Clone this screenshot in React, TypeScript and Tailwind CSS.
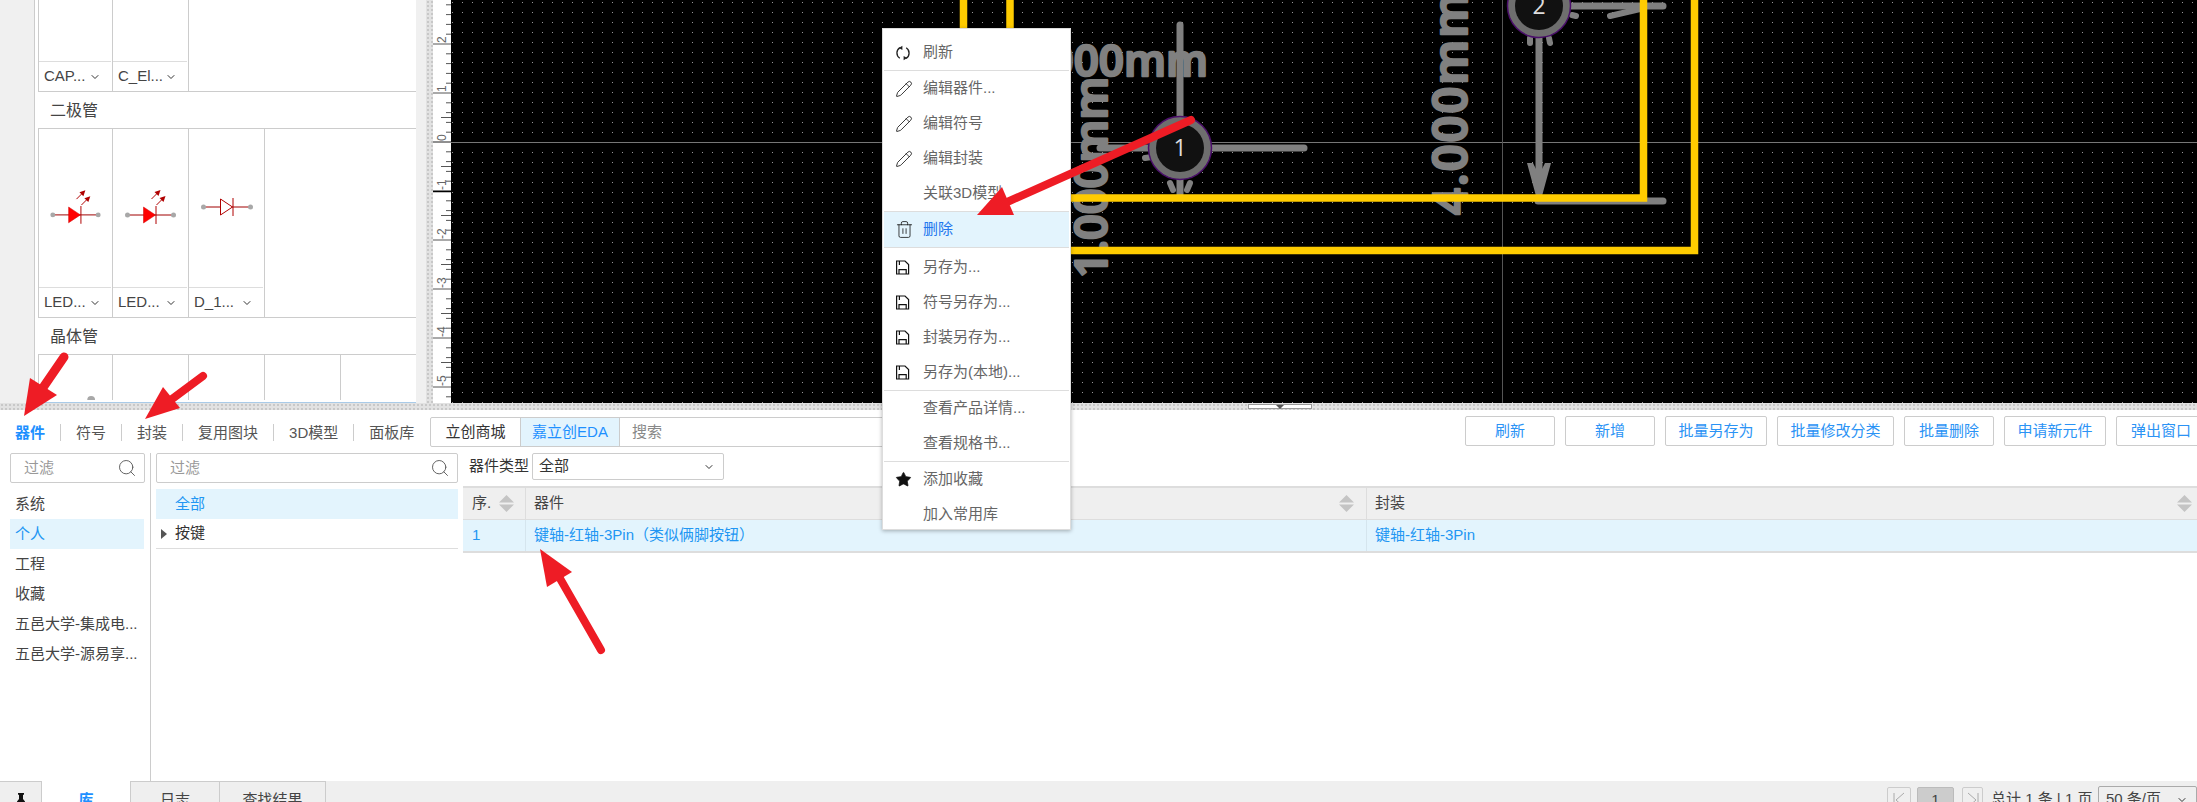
import { ChevronDown, Pencil, Search, Star, Trash2 } from 'lucide-react'
import type { ReactNode } from 'react'

const SideItem = ({ label, active }: { label: string; active?: boolean }) => (
  <div
    className={`h-[30px] leading-[30px] px-[5px] truncate ${
      active ? 'bg-[#e3f4fd] text-[#2196f3]' : 'text-[#444]'
    }`}
  >
    {label}
  </div>
)

const FilterInput = ({ width }: { width: string }) => (
  <div
    className={`${width} h-[30px] shrink-0 border border-[#ccc] rounded-[2px] flex items-center justify-between pl-[13px] pr-[7px] text-[#999]`}
  >
    <span>过滤</span>
    <Search size={20} strokeWidth={1.1} className="text-[#555]" />
  </div>
)

const SortArrows = () => (
  <svg width="15" height="17" viewBox="0 0 15 17" className="shrink-0">
    <polygon points="7.5,0 15,7.5 0,7.5" fill="#c4c4c4" />
    <polygon points="0,9.5 15,9.5 7.5,17" fill="#c4c4c4" />
  </svg>
)

const Led = () => (
  <svg viewBox="0 0 74 158" className="w-full h-full">
    <line x1="14" y1="86" x2="60" y2="86" stroke="#a00000" strokeWidth="1" />
    <polygon points="30,78 42,86 30,94" fill="#ff0000" stroke="#d00000" strokeWidth="0.5" />
    <line x1="42.5" y1="77" x2="42.5" y2="95" stroke="#b00000" strokeWidth="1" />
    <line x1="38" y1="70" x2="44" y2="64" stroke="#b00000" strokeWidth="1" />
    <polygon points="47,61 45,67 41,63" fill="#b00000" />
    <line x1="43" y1="76" x2="49" y2="70" stroke="#b00000" strokeWidth="1" />
    <polygon points="52,67 50,73 46,69" fill="#b00000" />
    <circle cx="14" cy="86" r="2.5" fill="#a8a8a8" />
    <circle cx="60" cy="86" r="2.5" fill="#a8a8a8" />
  </svg>
)

const Diode = () => (
  <svg viewBox="0 0 74 158" className="w-full h-full">
    <line x1="14" y1="78" x2="61" y2="78" stroke="#a00000" strokeWidth="1" />
    <polygon points="31,70 43,78 31,86" fill="#fff" stroke="#b00000" strokeWidth="1" />
    <line x1="43.5" y1="69" x2="43.5" y2="87" stroke="#b00000" strokeWidth="1" />
    <circle cx="14" cy="78" r="2.5" fill="#a8a8a8" />
    <circle cx="61" cy="78" r="2.5" fill="#a8a8a8" />
  </svg>
)

const Cell = ({
  label,
  width,
  children,
}: {
  label?: string
  width: string
  children?: ReactNode
}) => (
  <div className={`${width} h-full shrink-0 border-r border-[#ccc] flex flex-col`}>
    <div className="flex-1 min-h-0 overflow-hidden">{children}</div>
    {label && (
      <div className="h-[30px] shrink-0 mr-[1px] border-t border-[#ddd] flex items-center justify-between pl-[5px] pr-[10px] text-[#444]">
        <span>{label}</span>
        <ChevronDown size={12} strokeWidth={2} className="text-[#333]" />
      </div>
    )}
  </div>
)

const SectionTitle = ({ children }: { children: ReactNode }) => (
  <div className="h-[36px] leading-[38px] pl-[12px] text-[16px] text-[#444]">{children}</div>
)

const RULER_MARKS = [-5, -4, -3, -2, -1, 0, 1, 2]

const Ruler = () => {
  const ticks: number[] = []
  for (let i = -15; i <= 26; i++) ticks.push(142 + i * 9.8)
  return (
    <svg viewBox="433 0 18 403" className="block w-[18px] h-[403px] shrink-0 bg-white">
      {ticks.map((y, i) => {
        const step = i - 15
        const whole = step % 5 === 0
        const half = !whole && false
        return (
          <line
            key={i}
            x1={whole ? 433 : half ? 441 : 446}
            x2="451"
            y1={y}
            y2={y}
            stroke="#555"
            strokeWidth="1"
          />
        )
      })}
      {[-0.5, 0.5, 1.5, 2.5, 3.5, 4.5, 5.5].map((n) => (
        <line key={n} x1="441" x2="451" y1={142 + n * 49} y2={142 + n * 49} stroke="#555" />
      ))}
      <line x1="433" x2="451" y1="142" y2="142" stroke="#777" />
      <line x1="433" x2="451" y1="191.5" y2="191.5" stroke="#000" strokeWidth="1.5" />
      {RULER_MARKS.map((m) => {
        const y = 142 - m * 49 - 1
        return (
          <text
            key={m}
            x="446"
            y={y}
            fontSize="12"
            fill="#666"
            transform={`rotate(-90 446 ${y})`}
          >
            {m}
          </text>
        )
      })}
    </svg>
  )
}

const DIM_TEXT = {
  fill: '#808080',
  stroke: '#808080',
  strokeWidth: 2.5,
  strokeLinejoin: 'round' as const,
  fontFamily: '"Open Sans", sans-serif',
  fontWeight: 600,
}

const Pad = ({ x, y, n }: { x: number; y: number; n: string }) => (
  <g>
    <circle cx={x} cy={y} r="31.5" fill="#6e6e6e" stroke="#4b0f6b" strokeWidth="1.5" />
    <circle cx={x} cy={y} r="24" fill="#111" />
    <text
      x={x}
      y={y + 8}
      textAnchor="middle"
      fontSize="23"
      fill="#ddd"
      fontFamily='"Open Sans", sans-serif'
    >
      {n}
    </text>
  </g>
)

const Board = () => (
  <svg viewBox="451 0 1746 403" className="block w-[1746px] h-[403px] shrink-0 bg-black">
    <defs>
      <pattern id="grid" x="2" y="2" width="10" height="10" patternUnits="userSpaceOnUse">
        <rect width="1" height="1" fill="#9a9a9a" />
      </pattern>
    </defs>
    <rect x="451" y="0" width="1746" height="403" fill="url(#grid)" />
    <line x1="451" y1="142.5" x2="2197" y2="142.5" stroke="#777" />
    <line x1="1502.5" y1="0" x2="1502.5" y2="403" stroke="#555" />

    <g stroke="#808080" strokeWidth="7" strokeLinecap="round" fill="none">
      <line x1="1180" y1="25" x2="1180" y2="120" />
      <line x1="1100" y1="148" x2="1304" y2="148" />
      <line x1="1180" y1="176" x2="1180" y2="194" />
      <line x1="1170" y1="183" x2="1173" y2="190" strokeWidth="6" />
      <line x1="1190" y1="183" x2="1187" y2="190" strokeWidth="6" />
      <line x1="1145" y1="158" x2="1152" y2="157" strokeWidth="6" />
      <line x1="1539" y1="38" x2="1539" y2="190" />
      <line x1="1530" y1="38" x2="1530" y2="43" strokeWidth="6" />
      <line x1="1549" y1="38" x2="1550" y2="43" strokeWidth="6" />
      <line x1="1572" y1="15" x2="1576" y2="16" strokeWidth="6" />
      <line x1="1570" y1="6" x2="1663" y2="6" />
      <line x1="1538" y1="201" x2="1663" y2="201" />
      <line x1="1610" y1="16" x2="1640" y2="9" strokeWidth="6" />
    </g>
    <polygon points="1527,163 1533,163 1539,175 1545,163 1551,163 1542,196 1536,196" fill="#808080" />

    <text x="1208" y="76" textAnchor="end" fontSize="44" {...DIM_TEXT}>
      1.000mm
    </text>
    <text x="1107" y="278" fontSize="45" transform="rotate(-90 1107 278)" {...DIM_TEXT}>
      1.000mm
    </text>
    <text
      x="1467"
      y="215"
      fontSize="47"
      letterSpacing="2"
      transform="rotate(-90 1467 215)"
      {...DIM_TEXT}
    >
      4.000mm
    </text>

    <g fill="none" stroke="#ffcc00" strokeWidth="7.5" strokeLinejoin="miter">
      <path d="M963.5 -5V198H1643.5V-5" />
      <path d="M1010 -5V250.5H1694.5V-5" />
    </g>

    <Pad x={1180} y={148} n="1" />
    <Pad x={1539} y={6} n="2" />
  </svg>
)

const RefreshIcon = () => (
  <svg width="16" height="16" viewBox="0 0 16 16" fill="none" stroke="#222" strokeWidth="1.3">
    <path d="M5 2.6A6.2 6.2 0 0 0 4.8 13.2" />
    <path d="M11 13.4A6.2 6.2 0 0 0 11.2 2.8" />
    <polygon points="7.4,0.8 7.4,5 3.9,2.9" fill="#222" stroke="none" />
    <polygon points="8.6,15.2 8.6,11 12.1,13.1" fill="#222" stroke="none" />
  </svg>
)

const SaveIcon = () => (
  <svg width="15" height="15" viewBox="0 0 15 15" fill="none" stroke="#111" strokeWidth="1.2">
    <path d="M1.6 1H10L13.6 4.6V14H1.6Z" />
    <path d="M4 14V9.6H11.2V14" />
    <path d="M4.4 1V5" />
  </svg>
)

type MenuEntry = { label?: string; icon?: ReactNode; active?: boolean; sep?: boolean; wide?: boolean }

const pencil = <Pencil size={18} strokeWidth={1.1} className="text-[#111]" />

const MENU: MenuEntry[] = [
  { label: '刷新', icon: <RefreshIcon /> },
  { sep: true },
  { label: '编辑器件...', icon: pencil },
  { label: '编辑符号', icon: pencil },
  { label: '编辑封装', icon: pencil },
  { label: '关联3D模型' },
  { sep: true },
  { label: '删除', active: true, icon: <Trash2 size={19} strokeWidth={1} className="text-[#111]" /> },
  { sep: true, wide: true },
  { label: '另存为...', icon: <SaveIcon /> },
  { label: '符号另存为...', icon: <SaveIcon /> },
  { label: '封装另存为...', icon: <SaveIcon /> },
  { label: '另存为(本地)...', icon: <SaveIcon /> },
  { sep: true },
  { label: '查看产品详情...' },
  { label: '查看规格书...' },
  { sep: true },
  { label: '添加收藏', icon: <Star size={17} fill="#111" strokeWidth={1} className="text-[#111]" /> },
  { label: '加入常用库' },
]

const ContextMenu = () => (
  <div className="absolute left-[882px] top-[28px] w-[189px] h-[502px] pt-[6px] bg-white border border-[#ddd] shadow-[0_1px_4px_rgba(0,0,0,0.3)] text-[15px] text-[#666]">
    {MENU.map((m, i) =>
      m.sep ? (
        <div key={i} className={`h-[1px] mx-[1px] bg-[#ddd] ${m.wide ? 'mb-[2px]' : ''}`} />
      ) : (
        <div
          key={i}
          className={`h-[35px] mx-[1px] flex items-center ${m.active ? 'bg-[#e3f4fd] text-[#2277ee]' : ''}`}
        >
          <span className="w-[39px] pl-[11px] shrink-0 flex items-center">{m.icon}</span>
          <span>{m.label}</span>
        </div>
      ),
    )}
  </div>
)

const RedArrow = ({ from, to, head, w }: { from: number[]; to: number[]; head: number[]; w: number }) => (
  <g>
    <line x1={from[0]} y1={from[1]} x2={to[0]} y2={to[1]} stroke="#ee1c25" strokeWidth={w} strokeLinecap="round" />
    <polygon points={head.join(',')} fill="#ee1c25" />
  </g>
)

const Arrows = () => (
  <svg className="absolute inset-0 pointer-events-none" width="2197" height="802">
    <RedArrow from={[64, 357]} to={[40, 392]} head={[24, 416, 30, 378, 57, 395]} w={9} />
    <RedArrow from={[203, 376]} to={[168, 402]} head={[145, 419, 163, 387, 180, 408]} w={8} />
    <RedArrow from={[601, 650]} to={[558, 575]} head={[540, 549, 572, 572, 547, 587]} w={8} />
    <RedArrow from={[1191, 120]} to={[1005, 203]} head={[977, 215, 1002, 187, 1014, 215]} w={8} />
  </svg>
)

const BUTTONS = [
  { label: '刷新', w: 'w-[90px]' },
  { label: '新增', w: 'w-[90px]' },
  { label: '批量另存为', w: 'w-[102px]' },
  { label: '批量修改分类', w: 'w-[117px]' },
  { label: '批量删除', w: 'w-[90px]' },
  { label: '申请新元件', w: 'w-[102px]' },
  { label: '弹出窗口', w: 'w-[90px]' },
]

const TABS = ['器件', '符号', '封装', '复用图块', '3D模型', '面板库']

export default function App() {
  return (
    <div className="relative w-full h-[802px] overflow-hidden flex flex-col bg-white text-[15px] font-['Liberation_Sans','Noto_Sans_CJK_SC',sans-serif]">
      {/* top: library panel, ruler, board */}
      <div className="h-[403px] shrink-0 flex overflow-hidden">
        <div className="w-[35px] shrink-0 bg-[#f0f0f0] border-r border-[#ccc]" />
        <div className="w-[381px] shrink-0 h-full pl-[3px] border-b border-[#a9cbe8] overflow-hidden">
          <div className="h-[92px] flex border-l border-b border-[#ccc]">
            <Cell width="w-[74px]" label="CAP..." />
            <Cell width="w-[76px]" label="C_El..." />
          </div>
          <SectionTitle>二极管</SectionTitle>
          <div className="h-[190px] flex border-l border-t border-b border-[#ccc]">
            <Cell width="w-[74px]" label="LED...">
              <Led />
            </Cell>
            <Cell width="w-[76px]" label="LED...">
              <Led />
            </Cell>
            <Cell width="w-[76px]" label="D_1...">
              <Diode />
            </Cell>
          </div>
          <SectionTitle>晶体管</SectionTitle>
          <div className="h-[46px] flex border-l border-t border-[#ccc]">
            <Cell width="w-[74px]">
              <svg viewBox="0 0 74 46" className="w-full h-full">
                <circle cx="53" cy="46" r="4" fill="#a8a8a8" />
              </svg>
            </Cell>
            <Cell width="w-[76px]" />
            <Cell width="w-[76px]" />
            <Cell width="w-[76px]" />
          </div>
        </div>
        <div className="w-[10px] shrink-0 bg-[#f0f0f0]" />
        <div className="w-[7px] shrink-0 bg-[#e2e2e2] bg-[radial-gradient(#c8c8c8_1px,transparent_1px)] bg-[length:4px_4px]" />
        <Ruler />
        <Board />
      </div>

      {/* splitter */}
      <div className="h-[7px] shrink-0 flex bg-[#e2e2e2] bg-[radial-gradient(#c8c8c8_1px,transparent_1px)] bg-[length:4px_4px]">
        <div className="ml-[1248px] mt-[1px] w-[64px] h-[5px] bg-white border border-[#999] flex justify-center">
          <div className="w-0 h-0 border-x-[4px] border-x-transparent border-t-[4px] border-t-[#555]" />
        </div>
      </div>

      {/* library tabs and actions */}
      <div className="h-[43px] shrink-0 flex items-start pt-[6px]">
        <div className="w-[430px] shrink-0 flex items-center h-[30px] mt-[1px]">
          {TABS.map((t, i) => (
            <div
              key={t}
              className={`h-[17px] leading-[17px] px-[15px] ${i < TABS.length - 1 ? 'border-r border-[#ccc]' : ''} ${
                i === 0 ? 'text-[#1e90ff] font-bold' : 'text-[#555]'
              }`}
            >
              {t}
            </div>
          ))}
        </div>
        <div className="flex h-[30px] mt-[1px] border border-[#ccc] rounded-l-[2px] w-[510px] shrink-0">
          <div className="w-[89px] shrink-0 text-center leading-[28px] text-[#333]">立创商城</div>
          <div className="w-[100px] shrink-0 text-center leading-[28px] bg-[#e3f4fd] text-[#1e90ff] border-x border-[#ccc]">
            嘉立创EDA
          </div>
          <div className="flex-1 pl-[12px] leading-[28px] text-[#888]">搜索</div>
        </div>
        <div className="ml-auto -mr-[9px] flex gap-[10px]">
          {BUTTONS.map((b) => (
            <div
              key={b.label}
              className={`${b.w} h-[30px] shrink-0 border border-[#ccc] rounded-[2px] text-center leading-[28px] text-[#2b93f5]`}
            >
              {b.label}
            </div>
          ))}
        </div>
      </div>

      {/* library body */}
      <div className="h-[328px] shrink-0 flex pl-[10px]">
        <div className="w-[141px] shrink-0 pr-[6px] border-r border-[#ccc]">
          <FilterInput width="w-[135px]" />
          <div className="mt-[6px]">
            <SideItem label="系统" />
            <SideItem label="个人" active />
            <SideItem label="工程" />
            <SideItem label="收藏" />
            <SideItem label="五邑大学-集成电..." />
            <SideItem label="五邑大学-源易享..." />
          </div>
        </div>
        <div className="w-[302px] shrink-0 ml-[5px]">
          <FilterInput width="w-full" />
          <div className="mt-[6px] h-[30px] leading-[30px] pl-[19px] bg-[#e3f4fd] text-[#2196f3]">全部</div>
          <div className="h-[30px] border-b border-[#ddd] flex items-center pl-[5px] text-[#333]">
            <div className="w-0 h-0 border-y-[5px] border-y-transparent border-l-[6px] border-l-[#555] mr-[8px]" />
            按键
          </div>
        </div>
        <div className="flex-1 min-w-0 ml-[5px]">
          <div className="h-[27px] flex items-center pl-[6px] mb-[6px]">
            <span className="text-[#333] w-[63px] whitespace-nowrap">器件类型</span>
            <div className="w-[192px] h-[27px] border border-[#ccc] rounded-[2px] flex items-center justify-between pl-[6px] pr-[8px] text-[#333]">
              全部
              <ChevronDown size={12} strokeWidth={2} className="text-[#333]" />
            </div>
          </div>
          <div className="border-t-2 border-b-2 border-[#ddd]">
            <div className="h-[32px] flex bg-[#efefef] border-b border-[#ddd] text-[#444]">
              <div className="w-[63px] shrink-0 border-r border-[#ddd] flex items-center justify-between pl-[9px] pr-[11px]">
                序.
                <SortArrows />
              </div>
              <div className="w-[841px] shrink-0 border-r border-[#ddd] flex items-center justify-between pl-[8px] pr-[12px]">
                器件
                <SortArrows />
              </div>
              <div className="flex-1 flex items-center justify-between pl-[8px] pr-[5px]">
                封装
                <SortArrows />
              </div>
            </div>
            <div className="h-[31px] flex bg-[#e3f4fd] text-[#2196f3]">
              <div className="w-[63px] shrink-0 border-r border-[#d5e5ee] flex items-center pl-[9px]">1</div>
              <div className="w-[841px] shrink-0 border-r border-[#d5e5ee] flex items-center pl-[8px]">
                键轴-红轴-3Pin（类似俩脚按钮）
              </div>
              <div className="flex-1 flex items-center pl-[8px]">键轴-红轴-3Pin</div>
            </div>
          </div>
        </div>
      </div>

      {/* bottom tabs and pager */}
      <div className="h-[37px] shrink-0 flex bg-[#efefef] text-[#444]">
        <div className="w-[42px] shrink-0 border-r border-t border-[#ccc] flex justify-center pt-[11px]">
          <svg width="10" height="14" viewBox="0 0 10 14" fill="#111">
            <path d="M2 0H8V1.5L7 2V6L9 8.5V9.5H5.6L5 14L4.4 9.5H1V8.5L3 6V2L2 1.5Z" />
          </svg>
        </div>
        <div className="w-[88px] shrink-0 bg-white text-center leading-[37px] text-[#1e90ff] font-bold">库</div>
        <div className="w-[89px] shrink-0 border-l border-t border-[#ccc] text-center leading-[35px]">日志</div>
        <div className="w-[107px] shrink-0 border-x border-t border-[#ccc] text-center leading-[35px]">查找结果</div>
        <div className="ml-auto flex items-center">
          <div className="w-[24px] h-[26px] border border-[#ccc] rounded-[2px] flex items-center justify-center mr-[6px]">
            <svg width="14" height="16" viewBox="0 0 14 16" fill="none" stroke="#aaa">
              <path d="M2 1V15M12 1L4 8L12 15" />
            </svg>
          </div>
          <div className="w-[37px] h-[26px] bg-[#ccc] border border-[#bbb] rounded-[2px] text-center leading-[24px] mr-[8px]">1</div>
          <div className="w-[21px] h-[26px] border border-[#ccc] rounded-[2px] flex items-center justify-center mr-[8px]">
            <svg width="14" height="16" viewBox="0 0 14 16" fill="none" stroke="#aaa">
              <path d="M12 1V15M2 1L10 8L2 15" />
            </svg>
          </div>
          <div className="w-[101px] shrink-0 whitespace-nowrap mr-[6px] text-[#444]">总计 1 条 | 1 页</div>
          <div className="w-[99px] h-[28px] border border-[#aaa] rounded-[2px] flex items-center justify-between pl-[7px] pr-[8px]">
            50 条/页
            <ChevronDown size={12} strokeWidth={2} className="text-[#333]" />
          </div>
        </div>
      </div>

      <ContextMenu />
      <Arrows />
    </div>
  )
}
